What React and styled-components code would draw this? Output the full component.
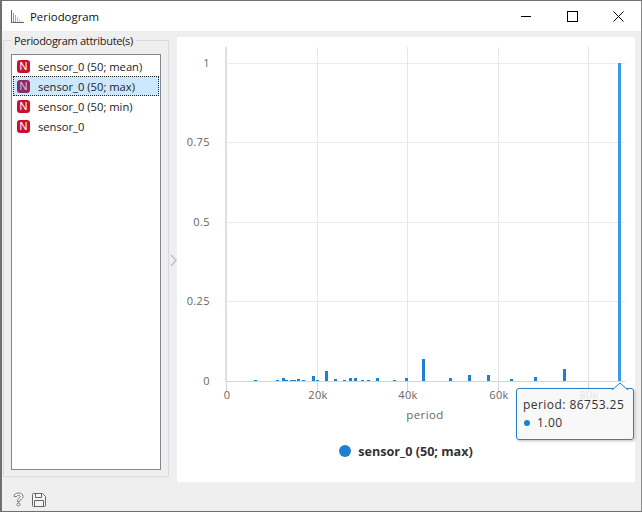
import React from 'react';
import styled, { createGlobalStyle } from 'styled-components';

const GlobalStyle = createGlobalStyle`
  html, body { margin: 0; padding: 0; background: #efefef; }
  body { font-family: "Open Sans", "Noto Sans", sans-serif; font-size: 12px; }
`;

const Window = styled.div`
  box-sizing: border-box;
  width: 642px;
  height: 512px;
  display: flex;
  flex-direction: column;
  background: #efefef;
  border: 1px solid #6f6f6f;
  border-left-width: 2px;
  border-right-color: #8a8a8a;
`;

const TitleBar = styled.div`
  flex: none;
  height: 30px;
  display: flex;
  align-items: center;
  background: #fff;
  padding-left: 9px;
`;

const TitleText = styled.span`
  margin-left: 6px;
  color: #111;
  font-size: 11.4px;
`;

const WindowControls = styled.div`
  margin-left: auto;
  display: flex;
`;

const WindowButton = styled.div`
  width: 46px;
  height: 30px;
  display: flex;
  align-items: center;
  justify-content: center;
`;

const Body = styled.div`
  flex: none;
  height: 451px;
  box-sizing: border-box;
  display: flex;
  padding: 2px 6px 0 1px;
`;

const GroupBox = styled.fieldset`
  box-sizing: border-box;
  flex: none;
  width: 166px;
  height: 444px;
  margin: 0;
  padding: 6px 7px 6px;
  border: 1px solid #dadada;
  border-radius: 1px;
  min-width: 0;
  display: flex;
`;

const GroupTitle = styled.legend`
  padding: 0 3px;
  margin-left: 0;
  color: #222;
  font-size: 11px;
  letter-spacing: -0.3px;
  line-height: 15px;
`;

const List = styled.ul`
  box-sizing: border-box;
  list-style: none;
  width: 150px;
  height: 416px;
  margin: 0;
  padding: 1px;
  background: #fff;
  border: 1px solid #82878f;
`;

const Row = styled.li`
  box-sizing: border-box;
  height: 20px;
  display: flex;
  align-items: center;
  padding-left: 4px;
  color: #222;
  font-size: 11.2px;
  background: ${props => (props.selected ? '#cce8ff' : 'transparent')};
  outline: ${props => (props.selected ? '1px dotted #222' : 'none')};
  outline-offset: -1px;
`;

const Badge = styled.span`
  flex: none;
  width: 13px;
  height: 13px;
  margin-right: 8px;
  border-radius: 3px;
  display: flex;
  align-items: center;
  justify-content: center;
  color: ${props => (props.selected ? '#d9c4d9' : '#fff')};
  background: ${props => (props.selected ? '#8c2a66' : '#c9102f')};
  font-family: "Liberation Sans", sans-serif;
  font-size: 11px;
  line-height: 13px;
`;

const Splitter = styled.div`
  flex: none;
  width: 8px;
  display: flex;
  align-items: center;
  justify-content: center;
  padding-top: 5px;
`;

const PlotPanel = styled.div`
  position: relative;
  flex: 1;
  height: 445px;
  margin-top: 4px;
  display: flex;
  flex-direction: column;
  background: #fff;
`;

const ChartSvg = styled.svg`
  flex: none;
  display: block;
`;

const AxisLabel = styled.text`
  fill: #666;
  font-family: "Open Sans", sans-serif;
  font-size: ${props => props.size || 11}px;
  letter-spacing: 0.4px;
`;

const Legend = styled.div`
  flex: none;
  display: flex;
  align-items: center;
  justify-content: center;
  gap: 7px;
  height: 28px;
  color: #333;
  font-weight: 700;
  font-size: 12.6px;
`;

const LegendDot = styled.span`
  width: 12px;
  height: 12px;
  border-radius: 50%;
  background: #1f7fd0;
`;

const Tooltip = styled.div`
  position: absolute;
  left: 339px;
  top: 351px;
  box-sizing: border-box;
  width: 118px;
  height: 52px;
  padding: 7px 6px;
  background: rgba(247, 247, 247, 0.88);
  border: 1px solid #2b7fc9;
  border-radius: 3px;
  box-shadow: 1px 1px 3px rgba(0, 0, 0, 0.25);
  color: #333;
  font-size: 12px;
  line-height: 18px;
  letter-spacing: 0.45px;
`;

const TooltipArrow = styled.svg`
  position: absolute;
  left: 95px;
  top: -7px;
  display: block;
`;

const TooltipValue = styled.div`
  display: flex;
  align-items: center;
  gap: 7px;
`;

const TooltipDot = styled.span`
  width: 6px;
  height: 6px;
  margin-left: 1px;
  border-radius: 50%;
  background: #1f7fd0;
`;

const Footer = styled.div`
  flex: none;
  box-sizing: border-box;
  height: 29px;
  display: flex;
  align-items: center;
  gap: 8px;
  padding: 6px 0 0 11px;
`;

const xTicks = [
  { x: 49, label: '0' },
  { x: 140, label: '20k' },
  { x: 230, label: '40k' },
  { x: 321, label: '60k' },
  { x: 411, label: '80k' },
];

const yTicks = [
  { y: 26, label: '1' },
  { y: 105, label: '0.75' },
  { y: 185, label: '0.5' },
  { y: 264, label: '0.25' },
  { y: 344, label: '0' },
];

// [left edge in page px, height]
const bars = [
  [254, 1], [276, 1], [282, 3], [285, 1], [290, 1], [293, 1], [297, 2], [302, 1],
  [312, 5], [316, 1], [325, 10], [334, 2], [343, 1], [349, 3], [354, 3], [361, 1],
  [367, 1], [376, 3], [393, 1], [405, 3], [422, 22], [449, 3], [468, 6], [487, 6],
  [510, 2], [534, 4], [563, 12],
];

const variables = [
  { name: 'sensor_0 (50; mean)' },
  { name: 'sensor_0 (50; max)', selected: true },
  { name: 'sensor_0 (50; min)' },
  { name: 'sensor_0' },
];

const Chart = () => (
  <ChartSvg width={458} height={400} shapeRendering="crispEdges">
    {yTicks.slice(0, 4).map(t => (
      <rect key={t.y} x={49} y={t.y} width={399} height={1} fill="#ebebeb" />
    ))}
    {xTicks.slice(1).map(t => (
      <rect key={t.x} x={t.x} y={10} width={1} height={334} fill="#e6e6e6" />
    ))}
    <rect x={48} y={10} width={2} height={334} fill="#dcdfe8" />
    {bars.map(([x, h]) => (
      <rect key={x} x={x - 177} y={344 - h} width={3} height={h} fill="#1f7fd0" />
    ))}
    <rect x={441} y={26} width={3} height={318} fill="#3a9bea" />
    <rect x={49} y={344} width={399} height={1} fill="#ccd6eb" />
    {xTicks.map(t => (
      <rect key={t.x} x={t.x} y={345} width={1} height={9} fill="#ccd6eb" />
    ))}
    <g shapeRendering="auto">
      {yTicks.map(t => (
        <AxisLabel key={t.y} x={33} y={t.y + 4} textAnchor="end">{t.label}</AxisLabel>
      ))}
      {xTicks.map(t => (
        <AxisLabel key={t.x} x={t.x + 1} y={362} textAnchor="middle">{t.label}</AxisLabel>
      ))}
      <AxisLabel x={248} y={382} size={11.5} textAnchor="middle">period</AxisLabel>
    </g>
  </ChartSvg>
);

const AppIcon = () => (
  <svg width="13" height="13" viewBox="0 0 13 13" shapeRendering="crispEdges">
    <path d="M0 0h1v12h12v1H0z" fill="#666" />
    <path d="M2 3h1v9H2z" fill="#999" />
    <path d="M4 5h1v7H4z" fill="#aaa" />
    <path d="M6 7h1v5H6z" fill="#bbb" />
    <path d="M8 9h1v3H8z" fill="#ccc" />
    <path d="M10 10h1v2h-1z" fill="#ddd" />
  </svg>
);

const Minimize = () => (
  <svg width="10" height="10" viewBox="0 0 10 10" shapeRendering="crispEdges">
    <path d="M0 5h10v1H0z" fill="#000" />
  </svg>
);

const Maximize = () => (
  <svg width="11" height="11" viewBox="0 0 11 11" shapeRendering="crispEdges">
    <rect x="0.5" y="0.5" width="10" height="10" fill="none" stroke="#000" />
  </svg>
);

const Close = () => (
  <svg width="11" height="11" viewBox="0 0 11 11">
    <path d="M0.5 0.5l10 10M10.5 0.5l-10 10" stroke="#000" fill="none" />
  </svg>
);

const Chevron = () => (
  <svg width="7" height="13" viewBox="0 0 7 13">
    <path d="M1 1l5 5.5L1 12" fill="none" stroke="#bdbdbd" strokeWidth="1.3" />
  </svg>
);

const HelpIcon = () => (
  <svg width="11" height="15" viewBox="0 0 11 15">
    <path
      d="M1 4.500C1 2.300 3 1 5.500 1S10 2.300 10 4.400c0 1.600-1 2.400-2.200 3.200-.8.500-1.100 1-1.100 1.900H4.400c0-1.600.5-2.400 1.500-3.100.8-.6 1.400-1 1.400-1.800 0-.9-.8-1.400-1.800-1.400-1.100 0-1.800.6-1.900 1.500z"
      fill="#fff"
      stroke="#666"
      strokeWidth="0.9"
    />
    <circle cx="5.500" cy="12.500" r="1.500" fill="#fff" stroke="#666" strokeWidth="0.9" />
  </svg>
);

const SaveIcon = () => (
  <svg width="14" height="14" viewBox="0 0 14 14">
    <path d="M1.500 0.500h9l3 3v9a1 1 0 0 1-1 1h-11a1 1 0 0 1-1-1v-11a1 1 0 0 1 1-1z" fill="#f5f5f5" stroke="#666" />
    <path d="M3.500 0.500v4h6v-4M2.500 13.500v-6h9v6" fill="none" stroke="#666" />
  </svg>
);

export default function App() {
  return (
    <>
      <GlobalStyle />
      <Window>
        <TitleBar>
          <AppIcon />
          <TitleText>Periodogram</TitleText>
          <WindowControls>
            <WindowButton><Minimize /></WindowButton>
            <WindowButton><Maximize /></WindowButton>
            <WindowButton><Close /></WindowButton>
          </WindowControls>
        </TitleBar>
        <Body>
          <GroupBox>
            <GroupTitle>Periodogram attribute(s)</GroupTitle>
            <List>
              {variables.map(v => (
                <Row key={v.name} selected={v.selected}>
                  <Badge selected={v.selected}>N</Badge>
                  {v.name}
                </Row>
              ))}
            </List>
          </GroupBox>
          <Splitter><Chevron /></Splitter>
          <PlotPanel>
            <Chart />
            <Legend>
              <LegendDot />
              sensor_0 (50; max)
            </Legend>
            <Tooltip>
              <TooltipArrow width="16" height="8" viewBox="0 0 16 8">
                <path d="M0 8L8 1l8 7" fill="#f7f7f7" stroke="#2b7fc9" />
              </TooltipArrow>
              period: 86753.25
              <TooltipValue>
                <TooltipDot />
                1.00
              </TooltipValue>
            </Tooltip>
          </PlotPanel>
        </Body>
        <Footer>
          <HelpIcon />
          <SaveIcon />
        </Footer>
      </Window>
    </>
  );
}
